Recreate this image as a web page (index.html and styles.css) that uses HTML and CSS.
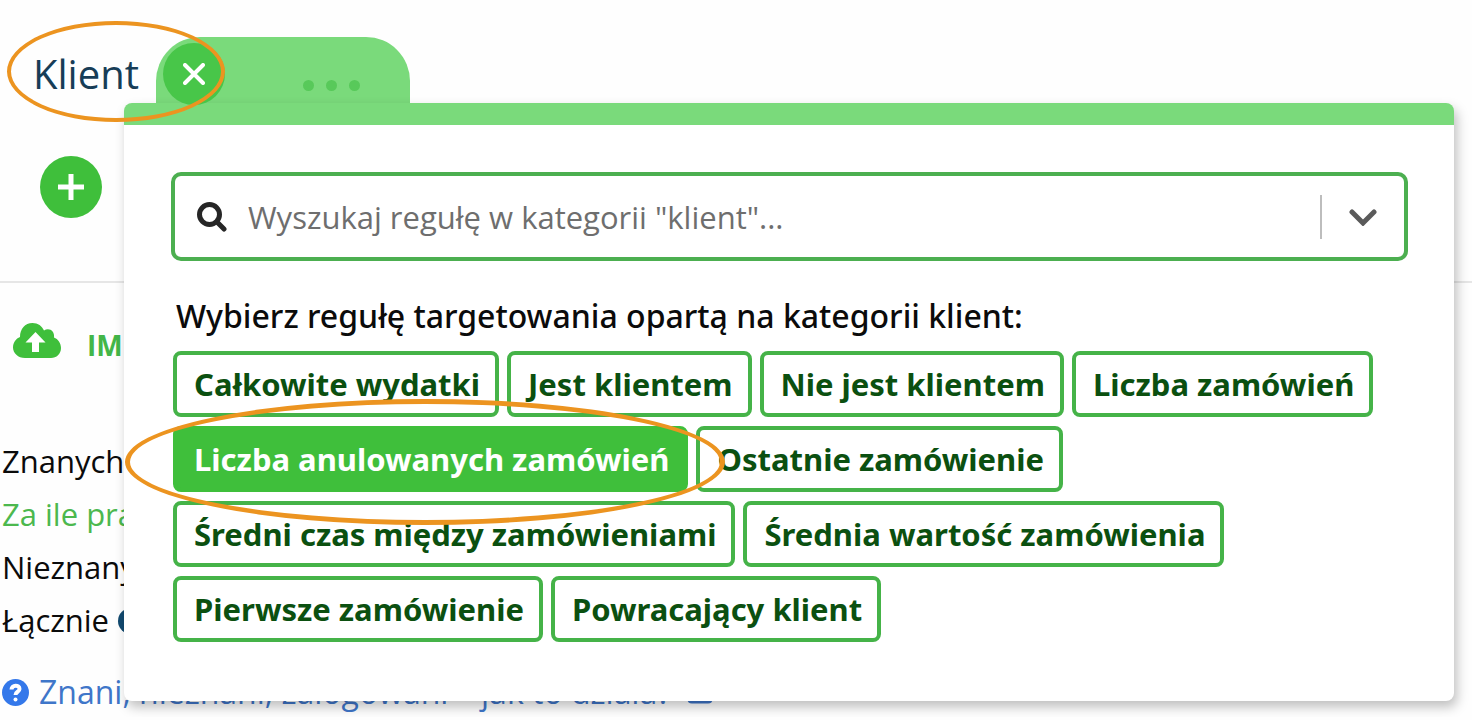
FILE: index.html
```html
<!DOCTYPE html>
<html lang="pl">
<head>
  <meta charset="UTF-8" />
  <meta name="viewport" content="width=device-width, initial-scale=1.0"/>
  <title>Reguły targetowania - klient</title>
  <link rel="stylesheet" href="styles.css">
</head>
<body>

<main class="page">
  <section class="rules">
    <div class="rule">
      <div class="rule-name marked marked-rule">
        <span class="rule-label">Klient</span>
        <button type="button" class="round-btn close-btn" aria-label="Zamknij">
          <svg width="22" height="22" viewBox="0 0 22 22"><path d="M2 2L20 20M20 2L2 20" /></svg>
        </button>
      </div>
    </div>
    <button type="button" class="round-btn add-btn" aria-label="Dodaj">
      <svg width="28" height="28" viewBox="0 0 28 28"><path d="M14 1V27M1 14H27" /></svg>
    </button>
  </section>

  <section class="audience">
    <a href="#" class="import-link">
      <svg width="48" height="36" viewBox="0 0 48 36">
        <path class="cloud" d="M12 35C5 35 0 30 0 24.500C0 19.500 3 15.500 7 14C7 6 12 0 19.500 0C25 0 29 3 31 7.500C36 4 42 8 41 14.500C45 16 48 20 48 25C48 31 43.500 35 38 35Z" />
        <path class="arrow" d="M22.500 9L32.500 19.500H26V29H19V19.500H12.500Z" />
      </svg>
      <span>IMPORT</span>
    </a>

    <div class="stats">
      <p>Znanych</p>
      <p><a href="#" class="price-link">Za ile pra</a></p>
      <p>Nieznanych</p>
      <p class="total">Łącznie <span class="badge"></span></p>
    </div>

    <a href="#" class="help-link">
      <svg class="help-icon" width="27" height="27" viewBox="0 0 27 27">
        <circle cx="13.500" cy="13.500" r="13.500" />
        <path d="M9.500 10.500C9.500 5.500 17.500 5.500 17.500 10C17.500 13 13.500 12.500 13.500 16" />
        <circle class="dot" cx="13.500" cy="20.500" r="2" />
      </svg>
      <span>Znani, nieznani, zalogowani – jak to działa?</span>
      <svg class="external-icon" width="26" height="24" viewBox="0 0 26 24">
        <path d="M12 4H5Q2 4 2 7V19Q2 22 5 22H21Q24 22 24 19V14M16 2H24V9M24 2L12 14" />
      </svg>
    </a>
  </section>

  <section class="popup">
    <div class="popup-tab">
      <span></span><span></span><span></span>
    </div>
    <div class="popup-panel">
      <form class="search">
        <label for="search" aria-label="Wyszukaj regułę">
          <svg width="30" height="30" viewBox="0 0 30 30"><circle cx="12.500" cy="12.500" r="10" /><path d="M20 20L27 27" /></svg>
        </label>
        <input type="text" id="search" placeholder="Wyszukaj regułę w kategorii &quot;klient&quot;..." />
        <button type="button" class="search-toggle" aria-label="Rozwiń listę">
          <svg width="28" height="18" viewBox="0 0 28 18"><path d="M3 4L14 15L25 4" /></svg>
        </button>
      </form>

      <h2>Wybierz regułę targetowania opartą na kategorii klient:</h2>

      <div class="chips">
        <button type="button" class="chip">Całkowite wydatki</button>
        <button type="button" class="chip">Jest klientem</button>
        <button type="button" class="chip">Nie jest klientem</button>
        <button type="button" class="chip">Liczba zamówień</button>
        <button type="button" class="chip active marked marked-chip">Liczba anulowanych zamówień</button>
        <button type="button" class="chip">Ostatnie zamówienie</button>
        <button type="button" class="chip">Średni czas między zamówieniami</button>
        <button type="button" class="chip">Średnia wartość zamówienia</button>
        <button type="button" class="chip">Pierwsze zamówienie</button>
        <button type="button" class="chip">Powracający klient</button>
      </div>
    </div>
  </section>
</main>

</body>
</html>
```

FILE: styles.css
```css
* {
  box-sizing: border-box;
}

body {
  margin: 0;
  font-family: "Open Sans", "Noto Sans", sans-serif;
  font-size: 32px;
  color: #0b0b0b;
  background: #fefefe;
  overflow: hidden;
}

button, input {
  font-family: inherit;
}

svg {
  display: block;
  flex: none;
  fill: none;
}

a {
  text-decoration: none;
}

.page {
  position: relative;
}

/* rules list */

.rules {
  padding-top: 43px;
  height: 283px;
  border-bottom: 2px solid #e6e6e6;
}

.rule-name {
  display: inline-flex;
  align-items: center;
  gap: 24px;
  padding-left: 33px;
}

.rule-label {
  font-size: 40px;
  line-height: 62px;
  color: #173d57;
}

.round-btn {
  display: flex;
  align-items: center;
  justify-content: center;
  width: 62px;
  height: 62px;
  padding: 0;
  border: none;
  border-radius: 50%;
  background: #3fbf3b;
  cursor: pointer;
}

.round-btn path {
  stroke: #fff;
  stroke-width: 4;
}

.close-btn {
  position: relative;
  z-index: 2;
  background: #48c649;
}

.close-btn path {
  stroke-linecap: round;
}

.add-btn {
  margin: 51px 0 0 40px;
}

.add-btn path {
  stroke-width: 5;
}

/* audience */

.import-link {
  display: flex;
  align-items: center;
  gap: 26px;
  padding: 40px 0 0 13px;
  color: #43b649;
  font-size: 28px;
  font-weight: 700;
  line-height: 40px;
}

.import-link svg {
  margin-bottom: 8px;
}

.cloud {
  fill: #3fbf3b;
}

.arrow {
  fill: #fff;
}

.stats {
  padding: 68px 0 0 2px;
}

.stats p {
  margin: 0;
  font-size: 31px;
  line-height: 53px;
}

.price-link {
  color: #4cb84e;
}

.total {
  display: flex;
  align-items: center;
  gap: 9px;
}

.badge {
  width: 26px;
  height: 26px;
  border-radius: 50%;
  background: #124a70;
}

.help-link {
  display: flex;
  align-items: center;
  gap: 10px;
  padding: 20px 0 0 2px;
  font-size: 32px;
  line-height: 50px;
  color: #3f76c9;
}

.help-icon circle {
  fill: #3478ea;
}

.help-icon path {
  stroke: #fff;
  stroke-width: 4;
}

.help-icon .dot {
  fill: #fff;
}

.external-icon {
  margin-left: 6px;
}

.external-icon path {
  stroke: #3f76c9;
  stroke-width: 3;
}

/* popup */

.popup {
  position: absolute;
  top: 37px;
  left: 124px;
  right: 18px;
}

.popup-tab {
  display: flex;
  align-items: center;
  justify-content: flex-end;
  gap: 12px;
  width: 254px;
  height: 66px;
  margin-left: 32px;
  padding: 30px 50px 0 0;
  border-radius: 44px 44px 0 0;
  background: #7ada7b;
}

.popup-tab span {
  width: 11px;
  height: 11px;
  border-radius: 50%;
  background: #58c95a;
}

.popup-panel {
  padding: 47px 46px 59px 47px;
  border-top: 22px solid #7ada7b;
  border-radius: 8px;
  background: #fff;
  box-shadow: 3px 6px 12px rgba(0, 0, 0, 0.25);
}

.search {
  display: flex;
  align-items: center;
  height: 89px;
  padding-left: 22px;
  border: 4px solid #4caf50;
  border-radius: 10px;
}

.search label svg {
  stroke: #262626;
  stroke-width: 5;
  stroke-linecap: round;
}

.search input {
  flex: 1;
  min-width: 0;
  margin-left: 21px;
  padding: 0;
  border: none;
  outline: none;
  font-size: 31px;
  background: transparent;
}

.search input::placeholder {
  color: #6e6e6e;
}

.search-toggle {
  display: flex;
  align-items: center;
  height: 44px;
  padding: 0 27px;
  border: none;
  border-left: 2px solid #bdbdbd;
  background: none;
  cursor: pointer;
}

.search-toggle svg {
  stroke: #5a5a5a;
  stroke-width: 5;
  stroke-linecap: round;
}

.popup-panel h2 {
  margin: 32px 0 13px 5px;
  font-family: "Noto Sans", sans-serif;
  font-size: 32px;
  font-weight: 500;
  line-height: 45px;
}

.chips {
  display: flex;
  flex-wrap: wrap;
  gap: 9px 8px;
  padding-left: 2px;
}

.chip {
  height: 66px;
  padding: 0 15px 0 17px;
  border: 4px solid #45b348;
  border-radius: 8px;
  background: #fff;
  color: #0b5010;
  font-family: "Noto Sans", sans-serif;
  font-size: 31px;
  font-weight: 700;
  cursor: pointer;
}

.chip.active {
  border-color: #3fbf3b;
  background: #3fbf3b;
  color: #fff;
}

/* orange outlines */

.marked {
  position: relative;
}

.marked::after {
  content: "";
  position: absolute;
  z-index: 3;
  border: 4px solid #ec9420;
  border-radius: 50%;
  pointer-events: none;
}

.marked-rule::after {
  inset: -22px 0 -17px 7px;
}

.marked-chip::after {
  inset: -31px -41px -37px -52px;
  border-width: 5px;
}
```
